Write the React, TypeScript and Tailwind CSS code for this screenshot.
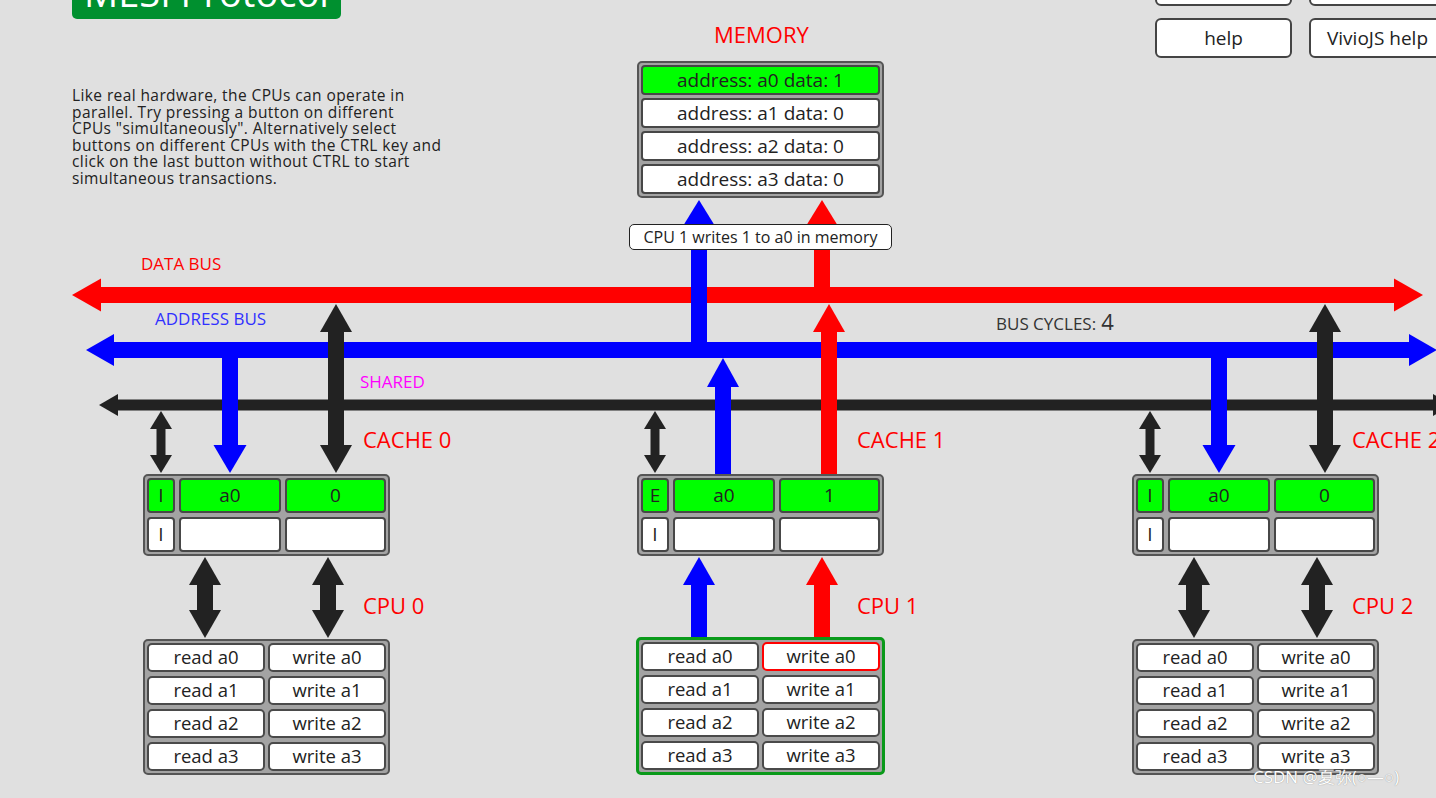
import React from "react";

type VProps = {
  x: number;
  y1: number;
  y2: number;
  w: number;
  hw: number;
  hl: number;
  up?: boolean;
  down?: boolean;
  color: string;
};

// vertical arrow, y1 < y2, heads optional on both ends
function VArrow({ x, y1, y2, w, hw, hl, up, down, color }: VProps) {
  const top = up ? y1 + hl - 0.5 : y1;
  const bot = down ? y2 - hl + 0.5 : y2;
  return (
    <g fill={color}>
      <rect x={x - w / 2} y={top} width={w} height={bot - top} />
      {up && <polygon points={`${x},${y1} ${x - hw / 2},${y1 + hl} ${x + hw / 2},${y1 + hl}`} />}
      {down && <polygon points={`${x},${y2} ${x - hw / 2},${y2 - hl} ${x + hw / 2},${y2 - hl}`} />}
    </g>
  );
}

type HProps = {
  y: number;
  x1: number;
  x2: number;
  t: number;
  hw: number;
  hl: number;
  color: string;
};

// horizontal bus, heads on both ends
function HBus({ y, x1, x2, t, hw, hl, color }: HProps) {
  return (
    <g fill={color}>
      <rect x={x1 + hl - 0.5} y={y - t / 2} width={x2 - x1 - 2 * hl + 1} height={t} />
      <polygon points={`${x1},${y} ${x1 + hl},${y - hw / 2} ${x1 + hl},${y + hw / 2}`} />
      <polygon points={`${x2},${y} ${x2 - hl},${y - hw / 2} ${x2 - hl},${y + hw / 2}`} />
    </g>
  );
}

const caches = [
  { x: 143, state: "I", addr: "a0", val: "0", active: false },
  { x: 637, state: "E", addr: "a0", val: "1", active: true },
  { x: 1132, state: "I", addr: "a0", val: "0", active: false },
];

const memory = [
  { addr: "a0", data: 1, hit: true },
  { addr: "a1", data: 0, hit: false },
  { addr: "a2", data: 0, hit: false },
  { addr: "a3", data: 0, hit: false },
];

const intro = [
  "Like real hardware, the CPUs can operate in",
  "parallel. Try pressing a button on different",
  'CPUs "simultaneously". Alternatively select',
  "buttons on different CPUs with the CTRL key and",
  "click on the last button without CTRL to start",
  "simultaneous transactions.",
];

const DARK = "#222222";
const RED = "#ff0000";
const BLUE = "#0000ff";

function Diagram() {
  return (
    <svg className="absolute inset-0" width={1436} height={798}>
      <HBus y={295} x1={72} x2={1423} t={16} hw={33} hl={29} color={RED} />
      <HBus y={350} x1={86} x2={1437} t={16} hw={32} hl={28} color={BLUE} />
      <HBus y={405} x1={99} x2={1452} t={11} hw={22} hl={19} color={DARK} />

      {/* memory side */}
      <VArrow x={699} y1={200} y2={350} w={16} hw={32} hl={26} up color={BLUE} />
      <VArrow x={822} y1={200} y2={295} w={16} hw={32} hl={26} up color={RED} />

      {caches.map((c, i) => (
        <g key={i}>
          <VArrow x={c.x + 18} y1={411} y2={473} w={9} hw={22} hl={18} up down color={DARK} />
          {c.active ? (
            <>
              <VArrow x={c.x + 86} y1={358} y2={474} w={16} hw={32} hl={29} up color={BLUE} />
              <VArrow x={c.x + 192} y1={304} y2={474} w={16} hw={32} hl={28} up color={RED} />
              <VArrow x={c.x + 62} y1={557} y2={638} w={16} hw={32} hl={28} up color={BLUE} />
              <VArrow x={c.x + 185} y1={557} y2={638} w={16} hw={32} hl={28} up color={RED} />
            </>
          ) : (
            <>
              <VArrow x={c.x + 87} y1={350} y2={473} w={16} hw={33} hl={28} down color={BLUE} />
              <VArrow x={c.x + 193} y1={304} y2={473} w={16} hw={32} hl={28} up down color={DARK} />
              <VArrow x={c.x + 62} y1={557} y2={638} w={16} hw={32} hl={28} up down color={DARK} />
              <VArrow x={c.x + 185} y1={557} y2={638} w={16} hw={32} hl={28} up down color={DARK} />
            </>
          )}
        </g>
      ))}
    </svg>
  );
}

function Cell({ children, green, className }: { children?: React.ReactNode; green?: boolean; className: string }) {
  return (
    <div
      className={`${className} flex items-center justify-center rounded-[4px] border-2 border-[#474747] text-[19px] leading-none text-[#222] ${
        green ? "bg-[#00ff00]" : "bg-white"
      }`}
    >
      {children}
    </div>
  );
}

function CacheBox({ x, state, addr, val }: { x: number; state: string; addr: string; val: string }) {
  return (
    <div
      className="absolute top-[474px] flex w-[247px] flex-col gap-[4px] rounded-[5px] border-2 border-[#555] bg-[#a3a3a3] p-[2px]"
      style={{ left: x }}
    >
      <div className="flex h-[35px] gap-[4px]">
        <Cell green className="w-[28px]">{state}</Cell>
        <Cell green className="w-[102px]">{addr}</Cell>
        <Cell green className="flex-1">{val}</Cell>
      </div>
      <div className="flex h-[35px] gap-[4px]">
        <Cell className="w-[28px]">I</Cell>
        <Cell className="w-[102px]" />
        <Cell className="flex-1" />
      </div>
    </div>
  );
}

function CpuBox({ x, active }: { x: number; active: boolean }) {
  const rows = ["a0", "a1", "a2", "a3"];
  return (
    <div
      className={`absolute grid grid-cols-2 gap-x-[3px] gap-y-[4px] rounded-[5px] bg-[#a3a3a3] p-[2px] ${
        active ? "top-[637px] w-[249px] border-[3px] border-[#0a9a1a]" : "top-[639px] w-[247px] border-2 border-[#555]"
      }`}
      style={{ left: active ? x - 1 : x }}
    >
      {rows.map((r) => (
        <React.Fragment key={r}>
          <button className="flex h-[29px] items-center justify-center rounded-[5px] border-2 border-[#4a4a4a] bg-white text-[18.5px] leading-none text-[#222]">
            read {r}
          </button>
          <button
            className={`flex h-[29px] items-center justify-center rounded-[5px] border-2 bg-white text-[18.5px] leading-none text-[#222] ${
              active && r === "a0" ? "border-[#ff0000]" : "border-[#4a4a4a]"
            }`}
          >
            write {r}
          </button>
        </React.Fragment>
      ))}
    </div>
  );
}

export default function App() {
  return (
    <div className="relative h-[798px] w-[1436px] overflow-hidden bg-[#e0e0e0] font-['Open_Sans',sans-serif]">
      {/* title banner, mostly scrolled off the top */}
      <div className="absolute left-[72px] top-[-41px] h-[60px] w-[269px] rounded-[5px] bg-[#00902f]">
        <div className="absolute left-[12px] top-[14px] whitespace-nowrap text-[38px] leading-none text-white">
          MESI Protocol
        </div>
      </div>

      <div className="absolute left-[72px] top-[87px] flex flex-col whitespace-nowrap text-[15.5px] leading-[16.5px] tracking-[0.4px] text-[#222]">
        {intro.map((line) => (
          <span key={line}>{line}</span>
        ))}
      </div>

      {/* top right buttons */}
      <div className="absolute left-[1155px] top-[-34px] grid w-[300px] grid-cols-[137px_137px] gap-x-[17px] gap-y-[12px]">
        <div className="h-[40px] rounded-[6px] border-2 border-[#444] bg-white" />
        <div className="h-[40px] rounded-[6px] border-2 border-[#444] bg-white" />
        <div className="flex h-[40px] items-center justify-center rounded-[6px] border-2 border-[#444] bg-white text-[19px] text-[#222]">
          help
        </div>
        <div className="flex h-[40px] items-center justify-center rounded-[6px] border-2 border-[#444] bg-white text-[19px] text-[#222]">
          VivioJS help
        </div>
      </div>

      <Diagram />

      {/* bus labels */}
      <div className="absolute left-[141px] top-[255px] text-[17px] leading-none text-[#ff0000]">DATA BUS</div>
      <div className="absolute left-[155px] top-[310px] text-[17px] leading-none text-[#3030ff]">ADDRESS BUS</div>
      <div className="absolute left-[360px] top-[373px] text-[17px] leading-none text-[#ff00ff]">SHARED</div>
      <div className="absolute left-[996px] top-[310px] flex items-baseline gap-[5px] leading-none text-[#333]">
        <span className="text-[17px]">BUS CYCLES:</span>
        <span className="text-[22px]">4</span>
      </div>

      {/* memory */}
      <div className="absolute left-[714px] top-[23px] text-[22px] leading-none text-[#ff0000]">MEMORY</div>
      <div className="absolute left-[637px] top-[61px] flex w-[247px] flex-col gap-[3px] rounded-[5px] border-2 border-[#555] bg-[#a3a3a3] p-[2px]">
        {memory.map((m) => (
          <div
            key={m.addr}
            className={`flex h-[30px] items-center justify-center rounded-[4px] border-2 border-[#474747] text-[19px] leading-none text-[#222] ${
              m.hit ? "bg-[#00ff00]" : "bg-white"
            }`}
          >
            address: {m.addr} data: {m.data}
          </div>
        ))}
      </div>

      <div className="absolute left-[629px] top-[224px] flex h-[26px] w-[263px] items-center justify-center rounded-[5px] border border-[#222] bg-white text-[16px] leading-none text-[#222]">
        CPU 1 writes 1 to a0 in memory
      </div>

      {caches.map((c, i) => (
        <React.Fragment key={i}>
          <CacheBox x={c.x} state={c.state} addr={c.addr} val={c.val} />
          <div
            className="absolute top-[428px] whitespace-nowrap text-[22px] leading-none text-[#ff0000]"
            style={{ left: c.x + 220 }}
          >
            CACHE {i}
          </div>
          <div
            className="absolute top-[594px] whitespace-nowrap text-[22px] leading-none text-[#ff0000]"
            style={{ left: c.x + 220 }}
          >
            CPU {i}
          </div>
          <CpuBox x={c.x} active={c.active} />
        </React.Fragment>
      ))}

      <div className="absolute left-[1253px] top-[768px] whitespace-nowrap text-[17px] leading-none text-white [text-shadow:0_0_1px_#777]">
        CSDN @夏弥(○—○)
      </div>
    </div>
  );
}
